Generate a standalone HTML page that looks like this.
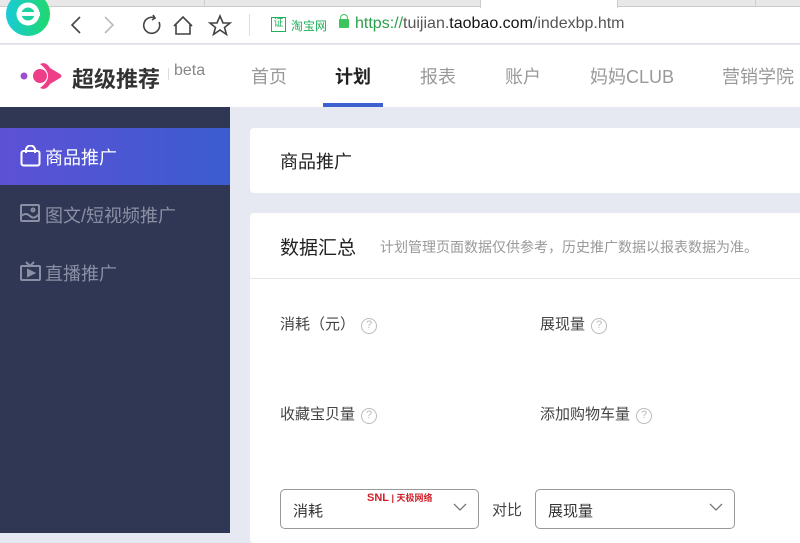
<!DOCTYPE html>
<html><head><meta charset="utf-8"><style>
*{margin:0;padding:0;box-sizing:border-box}
body{width:800px;height:533px;overflow:hidden;background:#e6e9f1;font-family:"Liberation Sans","Noto Sans CJK SC",sans-serif;position:relative}
.abs{position:absolute}
.chrome{left:0;top:0;width:800px;height:44px;background:#fff;border-bottom:1px solid #ddd}
.tabs{left:0;top:0;width:800px;height:7px;background:#e8e8e8;border-bottom:1px solid #ccc}
.hdr{left:0;top:45px;width:800px;height:62px;background:#fff}
.nav{top:63px;font-size:18px;color:#999}
.side{left:0;top:107px;width:230px;height:426px;background:#2f3755}
.act{left:0;top:128px;width:230px;height:57px;background:linear-gradient(90deg,#5d51d6,#3b5ccf)}
.si{left:20px;font-size:18px;color:#8a8fa3}
.card{background:#fff;border-radius:4px}
.lbl{font-size:15px;color:#444}
.q{display:inline-block;width:16px;height:16px;border:1.5px solid #bbb;border-radius:50%;font-size:11px;color:#bbb;text-align:center;line-height:13px;vertical-align:1px;margin-left:6px}
.sel{border:1px solid #999;border-radius:5px;height:40px;background:#fff;font-size:15px;color:#333;padding:10px 12px}
</style></head><body>
<div class="abs chrome"></div>
<div class="abs tabs"></div>
<div class="abs" style="left:80px;top:0;width:125px;height:7px;border-right:1px solid #ccc"></div>
<div class="abs" style="left:480px;top:0;width:138px;height:8px;background:#fff;border-left:1px solid #ccc;border-right:1px solid #ccc"></div>
<div class="abs" style="left:755px;top:0;width:1px;height:7px;background:#ccc"></div>
<svg class="abs" style="left:5px;top:0" width="48" height="40" viewBox="0 0 48 40"><defs><linearGradient id="g" x1="0" x2="1"><stop offset="0" stop-color="#19cbd8"/><stop offset="1" stop-color="#1fd86b"/></linearGradient></defs><circle cx="23" cy="14" r="22" fill="url(#g)"/><circle cx="23" cy="14" r="9" fill="none" stroke="#fff" stroke-width="5"/><rect x="13" y="12" width="22" height="4" fill="#fff"/></svg>
<svg class="abs" style="left:65px;top:14px" width="180" height="24" viewBox="0 0 180 24" fill="none" stroke-width="1.6"><path d="M15 3 L7 11 L15 19" stroke="#444"/><path d="M40 3 L48 11 L40 19" stroke="#bbb"/><path d="M90 4 A8 8 0 1 0 94 8" stroke="#444"/><path d="M88 1 L90 4 L87 6" stroke="#444"/><path d="M109 12 L118 3 L127 12 M111 10 V20 H125 V10" stroke="#444"/><path d="M155 2 L158 9 L165 9 L159.5 13.5 L161.5 20.5 L155 16 L148.5 20.5 L150.5 13.5 L145 9 L152 9Z" stroke="#444"/></svg>
<div class="abs" style="left:249px;top:14px;width:1px;height:22px;background:#ddd"></div>
<div class="abs" style="left:271px;top:17px;width:15px;height:15px;border:1.5px solid #1fb05a;font-size:10px;color:#1fb05a;text-align:center;line-height:12px">证</div>
<div class="abs" style="left:291px;top:17px;font-size:12px;color:#1fb05a">淘宝网</div>
<div class="abs" style="left:339px;top:19px;width:10px;height:9px;background:#3ec45d;border-radius:1px"></div>
<div class="abs" style="left:340px;top:14px;width:8px;height:8px;border:1.5px solid #3ec45d;border-radius:4px 4px 0 0"></div>
<div class="abs" style="left:355px;top:15px;font-size:16px;color:#555"><span style="color:#2a9e4a">https://</span>tuijian.<span style="color:#111">taobao.com</span>/indexbp.htm</div>
<div class="abs hdr"></div>
<svg class="abs" style="left:18px;top:58px" width="46" height="36" viewBox="0 0 46 36"><circle cx="6" cy="18" r="3.5" fill="#9b4fd0"/><circle cx="22" cy="18" r="7" fill="#ee3e87"/><path d="M22 6 Q28 3 32 10 L42 16 Q45 18 42 20 L32 26 Q28 33 22 30 Q30 24 30 18 Q30 12 22 6Z" fill="#ee3e87"/></svg>
<div class="abs" style="left:72px;top:62px;font-size:22px;font-weight:bold;color:#333">超级推荐</div>
<div class="abs" style="left:168px;top:68px;width:1px;height:12px;background:#ddd"></div>
<div class="abs" style="left:174px;top:62px;font-size:16px;color:#888">beta</div>
<div class="abs nav" style="left:251px">首页</div>
<div class="abs nav" style="left:335px;color:#222;font-weight:bold">计划</div>
<div class="abs nav" style="left:420px">报表</div>
<div class="abs nav" style="left:505px">账户</div>
<div class="abs nav" style="left:590px">妈妈CLUB</div>
<div class="abs nav" style="left:722px">营销学院</div>
<div class="abs" style="left:323px;top:103px;width:60px;height:4px;background:#3d5fd0"></div>
<div class="abs side"></div>
<div class="abs act"></div>
<svg class="abs" style="left:20px;top:145px" width="21" height="22" viewBox="0 0 21 22" fill="none" stroke="#fff" stroke-width="2"><rect x="1.5" y="6" width="18" height="14.5" rx="2"/><path d="M6 8 V5 A4.5 4.5 0 0 1 15 5 V8"/></svg>
<div class="abs si" style="left:45px;top:144px;color:#fff">商品推广</div>
<svg class="abs" style="left:20px;top:204px" width="20" height="18" viewBox="0 0 20 18" fill="none" stroke="#8a8fa3" stroke-width="2"><rect x="1" y="1" width="18" height="16" rx="1"/><path d="M1 12 Q6 8 10 12 T19 10"/><circle cx="13" cy="6" r="1.5"/></svg>
<div class="abs si" style="left:45px;top:202px">图文/短视频推广</div>
<svg class="abs" style="left:20px;top:261px" width="21" height="20" viewBox="0 0 21 20" fill="none" stroke="#8a8fa3" stroke-width="2"><rect x="1" y="5" width="19" height="14" rx="1"/><path d="M6 1 L10 5 L14 1"/><path d="M8 9 L14 12 L8 15Z" fill="#8a8fa3"/></svg>
<div class="abs si" style="left:45px;top:260px">直播推广</div>
<div class="abs card" style="left:250px;top:128px;width:560px;height:65px"></div>
<div class="abs" style="left:280px;top:148px;font-size:18px;color:#222">商品推广</div>
<div class="abs card" style="left:250px;top:213px;width:560px;height:330px"></div>
<div class="abs" style="left:250px;top:278px;width:550px;height:1px;background:#e6e6e6"></div>
<div class="abs" style="left:280px;top:233px;font-size:19px;color:#222">数据汇总</div>
<div class="abs" style="left:380px;top:237px;font-size:14px;color:#999">计划管理页面数据仅供参考，历史推广数据以报表数据为准。</div>
<div class="abs lbl" style="left:280px;top:313px">消耗（元）<span class="q">?</span></div>
<div class="abs lbl" style="left:540px;top:313px">展现量<span class="q">?</span></div>
<div class="abs lbl" style="left:280px;top:403px">收藏宝贝量<span class="q">?</span></div>
<div class="abs lbl" style="left:540px;top:403px">添加购物车量<span class="q">?</span></div>
<div class="abs sel" style="left:280px;top:489px;width:199px">消耗</div>
<div class="abs" style="left:492px;top:499px;font-size:15px;color:#444">对比</div>
<div class="abs sel" style="left:535px;top:489px;width:200px">展现量</div>
<svg class="abs" style="left:453px;top:502px" width="14" height="10" fill="none" stroke="#777" stroke-width="1.3"><path d="M1 2 L7 8 L13 2"/></svg>
<svg class="abs" style="left:709px;top:502px" width="14" height="10" fill="none" stroke="#777" stroke-width="1.3"><path d="M1 2 L7 8 L13 2"/></svg>
<div class="abs" style="left:367px;top:491px;font-size:11px;font-weight:bold;color:#d0202a">SNL<span style="color:#d0202a;font-size:9px"> | 天极网络</span></div>
</body></html>
